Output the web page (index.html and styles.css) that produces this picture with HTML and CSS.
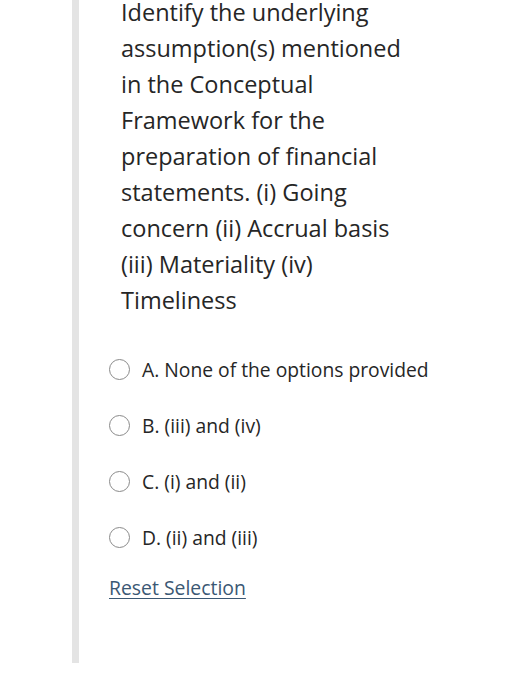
FILE: index.html
```html
<!DOCTYPE html>
<html>
<head>
<meta charset="utf-8">
<link rel="stylesheet" href="styles.css">
</head>
<body>
<div class="page">
  <div class="rail"></div>
  <div class="content">
    <p class="question">Identify the underlying assumption(s) mentioned in the Conceptual Framework for the preparation of financial statements. (i) Going concern (ii) Accrual basis (iii) Materiality (iv) Timeliness</p>
    <ul class="options">
      <li class="option"><span class="radio"></span><span class="label">A. None of the options provided</span></li>
      <li class="option"><span class="radio"></span><span class="label">B. (iii) and (iv)</span></li>
      <li class="option"><span class="radio"></span><span class="label">C. (i) and (ii)</span></li>
      <li class="option"><span class="radio"></span><span class="label">D. (ii) and (iii)</span></li>
    </ul>
    <a class="reset" href="#">Reset Selection</a>
  </div>
</div>
</body>
</html>
```

FILE: styles.css
```css
html, body {
  margin: 0;
  padding: 0;
  background: #ffffff;
}
body {
  font-family: "Open Sans", "Noto Sans", sans-serif;
  color: #262626;
}
.page {
  display: flex;
  padding-left: 72px;
}
.rail {
  width: 7px;
  height: 663px;
  background: #e4e4e4;
  flex: none;
}
.content {
  padding-left: 42px;
  width: 295px;
}
.question {
  margin: -6px 0 0 0;
  font-size: 23.5px;
  line-height: 36px;
}
.options {
  list-style: none;
  margin: 40px 0 0 -12px;
  padding: 0;
  display: flex;
  flex-direction: column;
  gap: 34px;
}
.option {
  display: flex;
  align-items: center;
  gap: 12px;
  height: 22px;
  font-size: 19.3px;
  white-space: nowrap;
}
.radio {
  width: 19px;
  height: 19px;
  border: 1px solid #8a8a8a;
  border-radius: 50%;
  flex: none;
}
.reset {
  display: inline-block;
  margin: 26px 0 0 -12px;
  font-size: 19.4px;
  color: #3b5874;
  text-decoration: underline;
  text-underline-offset: 3px;
}
```
